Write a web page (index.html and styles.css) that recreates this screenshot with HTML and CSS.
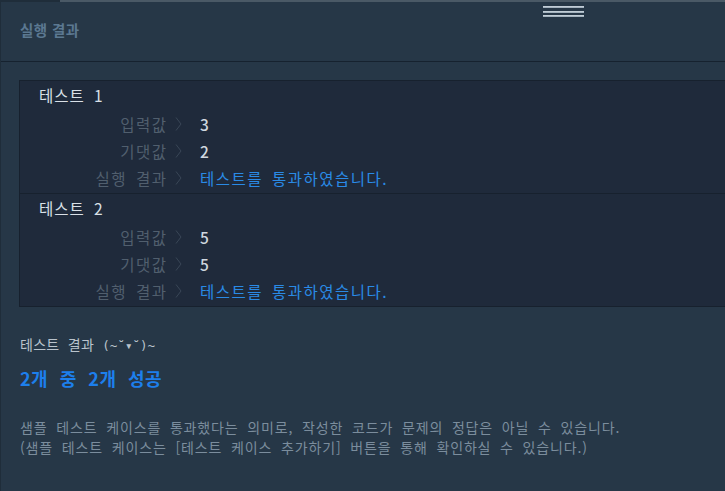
FILE: index.html
```html
<!DOCTYPE html>
<html lang="ko">
<head>
<meta charset="utf-8">
<title>실행 결과</title>
<link rel="stylesheet" href="styles.css">
</head>
<body>
<div class="page">
  <div class="handle" aria-hidden="true"><span></span><span></span><span></span></div>
  <header class="header">실행 결과</header>
  <section class="box">
    <div class="test">
      <div class="title">테스트 1</div>
      <div class="row"><span class="label">입력값</span><svg class="chev" width="7" height="14" viewBox="0 0 7 14"><polyline points="1,0.5 6,7 1,13.5" fill="none" stroke="#3a4757" stroke-width="1"/></svg><span class="value">3</span></div>
      <div class="row"><span class="label">기댓값</span><svg class="chev" width="7" height="14" viewBox="0 0 7 14"><polyline points="1,0.5 6,7 1,13.5" fill="none" stroke="#3a4757" stroke-width="1"/></svg><span class="value">2</span></div>
      <div class="row"><span class="label">실행 결과</span><svg class="chev" width="7" height="14" viewBox="0 0 7 14"><polyline points="1,0.5 6,7 1,13.5" fill="none" stroke="#3a4757" stroke-width="1"/></svg><span class="value pass">테스트를 통과하였습니다.</span></div>
    </div>
    <div class="test">
      <div class="title">테스트 2</div>
      <div class="row"><span class="label">입력값</span><svg class="chev" width="7" height="14" viewBox="0 0 7 14"><polyline points="1,0.5 6,7 1,13.5" fill="none" stroke="#3a4757" stroke-width="1"/></svg><span class="value">5</span></div>
      <div class="row"><span class="label">기댓값</span><svg class="chev" width="7" height="14" viewBox="0 0 7 14"><polyline points="1,0.5 6,7 1,13.5" fill="none" stroke="#3a4757" stroke-width="1"/></svg><span class="value">5</span></div>
      <div class="row"><span class="label">실행 결과</span><svg class="chev" width="7" height="14" viewBox="0 0 7 14"><polyline points="1,0.5 6,7 1,13.5" fill="none" stroke="#3a4757" stroke-width="1"/></svg><span class="value pass">테스트를 통과하였습니다.</span></div>
    </div>
  </section>
  <section class="summary">
    <p class="sum-title">테스트 결과 <span class="emo">(~˘▾˘)~</span></p>
    <p class="sum-count">2개 중 2개 성공</p>
    <p class="note">샘플 테스트 케이스를 통과했다는 의미로, 작성한 코드가 문제의 정답은 아닐 수 있습니다.<br>(샘플 테스트 케이스는 [테스트 케이스 추가하기] 버튼을 통해 확인하실 수 있습니다.)</p>
  </section>
</div>
</body>
</html>
```

FILE: styles.css
```css
html, body {
  margin: 0;
  padding: 0;
  background: #263747;
  overflow: hidden;
}
body {
  width: 725px;
  height: 491px;
  font-family: "Noto Sans CJK KR", "Noto Sans", sans-serif;
}
.page {
  position: relative;
  height: 489px;
  border-top: 2px solid #3f4e5c;
  border-left: 1px solid #1c2936;
  border-image: linear-gradient(to right, #1f2d3a 0, #1f2d3a 60px, #4a5966 60px, #4a5966 100%) 1;
  border-right: 0;
  border-bottom: 0;
  overflow: hidden;
}
.handle {
  position: absolute;
  left: 542px;
  top: 4px;
  width: 41px;
  display: flex;
  flex-direction: column;
  gap: 2.5px;
}
.handle span {
  display: block;
  height: 2px;
  background: linear-gradient(to bottom, #d0dae2, #95a5b3);
}
.header {
  height: 41px;
  padding: 18px 0 0 19px;
  border-bottom: 1px solid #16222f;
  font-size: 14.5px;
  line-height: 20px;
  font-weight: 700;
  letter-spacing: 0.4px;
  color: #5b7891;
}
.box {
  margin: 18px -20px 0 18px;
  border: 1px solid #17212e;
  background: #1f2a3b;
}
.test {
  padding: 2px 0;
}
.test + .test {
  border-top: 1px solid #17212e;
}
.title {
  padding-left: 19px;
  height: 24px;
  line-height: 24px;
  font-size: 15.5px;
  letter-spacing: 1px;
  word-spacing: 4px;
  color: #d9e0e7;
  margin-bottom: 3px;
}
.row {
  display: flex;
  align-items: center;
  height: 27px;
  font-size: 15.5px;
  letter-spacing: 1.5px;
  word-spacing: 3px;
}
.label {
  width: 147.5px;
  text-align: right;
  color: #515f6e;
}
.chev {
  margin-left: 7.5px;
  flex: none;
}
.value {
  margin-left: 18px;
  color: #cfd7df;
  font-weight: 500;
}
.value.pass {
  color: #2a8ae6;
  font-weight: 400;
}
.summary {
  padding-left: 19px;
}
.summary p {
  margin: 0;
}
.sum-title {
  margin-top: 27px !important;
  font-size: 14px;
  line-height: 20px;
  letter-spacing: 0.3px;
  word-spacing: 4px;
  color: #b9c3cc;
}
.emo {
  font-family: "DejaVu Sans Mono", monospace;
  font-size: 12.5px;
  letter-spacing: 0;
  word-spacing: 0;
}
.sum-count {
  margin-top: 9px !important;
  font-size: 18px;
  line-height: 26px;
  font-weight: 700;
  letter-spacing: 0.5px;
  word-spacing: 6px;
  color: #1d7fec;
}
.note {
  margin-top: 26px !important;
  font-size: 14px;
  line-height: 20px;
  letter-spacing: 0.85px;
  word-spacing: 4px;
  color: #7b8d9d;
}
```
